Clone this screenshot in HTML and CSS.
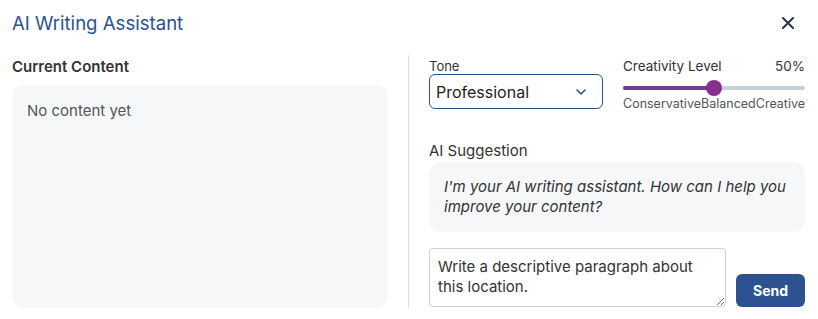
FILE: index.html
```html
<!DOCTYPE html>
<html lang="en">
<head>
<meta charset="utf-8">
<title>AI Writing Assistant</title>
<link rel="stylesheet" href="styles.css">
</head>
<body>
<div class="app">
  <header class="header">
    <h1 class="title">AI Writing Assistant</h1>
    <button class="close" aria-label="Close">
      <svg width="12" height="12" viewBox="0 0 12 12"><path d="M1 1L11 11M11 1L1 11" stroke="#2d3748" stroke-width="2" stroke-linecap="round"/></svg>
    </button>
  </header>
  <main class="main">
    <section class="left">
      <div class="label-strong">Current Content</div>
      <div class="content-box">No content yet</div>
    </section>
    <div class="divider"></div>
    <section class="right">
      <div class="controls">
        <div class="tone">
          <div class="small-label">Tone</div>
          <div class="select">
            <span>Professional</span>
            <svg width="10" height="6" viewBox="0 0 10 6"><path d="M1 1L5 5L9 1" fill="none" stroke="#2c5282" stroke-width="1.6" stroke-linecap="round" stroke-linejoin="round"/></svg>
          </div>
        </div>
        <div class="creativity">
          <div class="cr-head"><span>Creativity Level</span><span>50%</span></div>
          <div class="slider">
            <div class="track"><div class="fill" style="width:50%"></div></div>
            <div class="thumb" style="left:50%"></div>
          </div>
          <div class="cr-labels"><span>Conservative</span><span>Balanced</span><span>Creative</span></div>
        </div>
      </div>
      <div class="sugg-label">AI Suggestion</div>
      <div class="sugg-box">I'm your AI writing assistant. How can I help you improve your content?</div>
      <div class="input-row">
        <textarea class="prompt">Write a descriptive paragraph about this location.</textarea>
        <button class="send">Send</button>
      </div>
    </section>
  </main>
</div>
</body>
</html>
```
FILE: styles.css
```css
* { box-sizing: border-box; }
html, body { margin: 0; padding: 0; background: #fff; }
body { font-family: Inter, "Liberation Sans", sans-serif; color: #2d3748; }
.app {
  height: 319px;
  display: flex;
  flex-direction: column;
  padding: 9px 13px 11px 12px;
}
.header {
  display: flex;
  justify-content: space-between;
  align-items: center;
  height: 28px;
}
.title {
  margin: 0;
  font-size: 18.6px;
  font-weight: 400;
  line-height: 28px;
  color: #2c5292;
}
.close {
  border: 0;
  background: none;
  padding: 0;
  width: 24px;
  height: 24px;
  display: flex;
  align-items: center;
  justify-content: center;
  margin-right: 5px;
}
.main {
  flex: 1;
  min-height: 0;
  margin-top: 18px;
  display: grid;
  grid-template-columns: 376px 1px 376px;
  column-gap: 20px;
}
.left { display: flex; flex-direction: column; }
.label-strong {
  font-size: 15px;
  font-weight: 600;
  line-height: 24px;
  color: #333;
}
.content-box {
  flex: 1;
  margin-top: 6px;
  background: #f6f7f9;
  border-radius: 12px;
  padding: 15px 15px;
  font-size: 15px;
  line-height: 22px;
  color: #555;
}
.divider { background: #dedede; }
.right { display: flex; flex-direction: column; }
.controls { display: flex; gap: 20px; margin-top: 3px; }
.tone { width: 174px; }
.small-label { font-size: 13px; line-height: 16px; color: #333; }
.select {
  height: 35px;
  border: 1px solid #2c5292;
  border-radius: 6px;
  display: flex;
  align-items: center;
  justify-content: space-between;
  padding: 0 16px 0 6px;
  font-size: 16px;
  color: #222;
}
.creativity { flex: 1; }
.cr-head {
  display: flex;
  justify-content: space-between;
  font-size: 13.5px;
  line-height: 16px;
  color: #333;
}
.slider { position: relative; height: 16px; margin-top: 6px; }
.track {
  position: absolute;
  left: 0; right: 0; top: 6px;
  height: 4px;
  border-radius: 2px;
  background: #c8d0dc;
  overflow: hidden;
}
.fill { height: 100%; background: #6f3d8b; }
.thumb {
  position: absolute;
  top: 0;
  width: 16px;
  height: 16px;
  margin-left: -8px;
  border-radius: 50%;
  background: #8b2f8c;
}
.cr-labels {
  display: flex;
  justify-content: space-between;
  font-size: 12.5px;
  line-height: 15px;
  margin-top: 0;
  color: #555;
  white-space: nowrap;
}
.sugg-label {
  margin-top: 31px;
  font-size: 15px;
  line-height: 18px;
  color: #333;
}
.sugg-box {
  margin-top: 2px;
  background: #f6f7f9;
  border-radius: 12px;
  padding: 15px 15px 15px 15px;
  font-size: 15px;
  font-style: italic;
  line-height: 20px;
  color: #333;
}
.input-row {
  display: flex;
  align-items: flex-end;
  gap: 10px;
  margin-top: 16px;
}
.prompt {
  flex: 1;
  height: 59px;
  border: 1px solid #cfcfcf;
  border-radius: 4px;
  padding: 8px 8px;
  font-family: Inter, "Liberation Sans", sans-serif;
  font-size: 15px;
  line-height: 20px;
  color: #333;
  resize: vertical;
  margin: 0;
}
.send {
  width: 69px;
  height: 33px;
  margin-bottom: 0;
  border: 0;
  border-radius: 6px;
  background: #2c5292;
  color: #fff;
  font-family: Inter, "Liberation Sans", sans-serif;
  font-weight: 700;
  font-size: 14px;
}
```
